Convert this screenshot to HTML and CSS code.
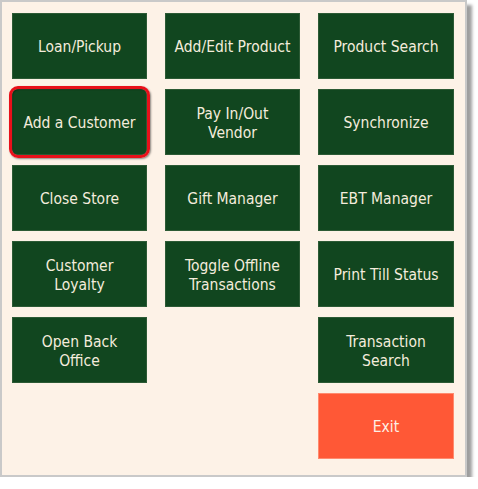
FILE: index.html
```html
<!DOCTYPE html>
<html>
<head>
<meta charset="utf-8">
<link rel="stylesheet" href="styles.css">
</head>
<body>
<div class="frame">
  <div class="grid">
    <div class="btn">Loan/Pickup</div>
    <div class="btn">Add/Edit Product</div>
    <div class="btn">Product Search</div>
    <div class="btn highlighted">Add a Customer</div>
    <div class="btn">Pay In/Out<br>Vendor</div>
    <div class="btn">Synchronize</div>
    <div class="btn">Close Store</div>
    <div class="btn">Gift Manager</div>
    <div class="btn">EBT Manager</div>
    <div class="btn">Customer<br>Loyalty</div>
    <div class="btn">Toggle Offline<br>Transactions</div>
    <div class="btn">Print Till Status</div>
    <div class="btn">Open Back<br>Office</div>
    <div class="empty"></div>
    <div class="btn">Transaction<br>Search</div>
    <div class="empty"></div>
    <div class="empty"></div>
    <div class="btn exit">Exit</div>
  </div>
</div>
</body>
</html>
```

FILE: styles.css
```css
html, body {
  margin: 0;
  padding: 0;
  background: #ffffff;
}
.frame {
  width: 463px;
  height: 473px;
  border: 2px solid #c9c9c9;
  background: #fdf2e7;
  box-shadow: 5px 5px 3px rgba(0, 0, 0, 0.38);
  box-sizing: content-box;
}
.grid {
  display: grid;
  grid-template-columns: 135px 135px 136px;
  grid-auto-rows: 66px;
  column-gap: 18px;
  row-gap: 10px;
  padding: 11px 0 0 10px;
}
.btn {
  display: flex;
  align-items: center;
  justify-content: center;
  text-align: center;
  background: #11461f;
  color: #f4ecdc;
  font-family: "DejaVu Sans Condensed", "DejaVu Sans", sans-serif;
  font-stretch: condensed;
  font-size: 15.5px;
  line-height: 19px;
  padding-top: 3px;
  border: 1px solid #2c5a35;
  box-sizing: border-box;
}
.highlighted {
  position: relative;
  border-radius: 5px;
}
.highlighted::after {
  content: "";
  position: absolute;
  left: -4px;
  top: -4px;
  right: -4px;
  bottom: -4px;
  border: 3px solid #e8101a;
  border-radius: 9px;
  box-shadow: 1px 1px 2px rgba(0, 0, 0, 0.45), inset 1px 1px 1px rgba(0, 0, 0, 0.35);
}
.exit {
  background: #ff5836;
  border-color: #ff8a6e;
  color: #fdf0e6;
}
```
